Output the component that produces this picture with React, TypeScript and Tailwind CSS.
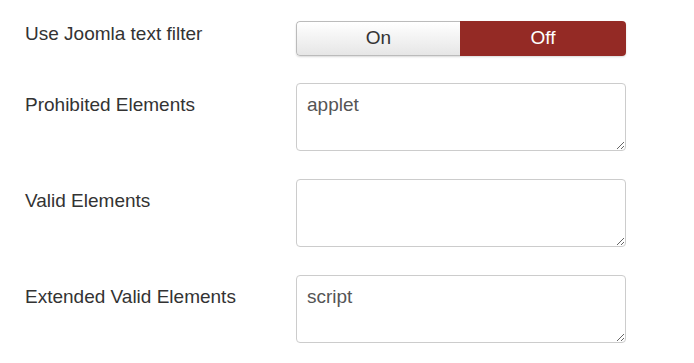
import React from "react";

const rows = [
  { label: "Prohibited Elements", value: "applet" },
  { label: "Valid Elements", value: "" },
  { label: "Extended Valid Elements", value: "script" },
];

const App: React.FC = () => {
  return (
    <div
      className="w-[694px] h-[363px] bg-white pl-[25px] pt-[21px] text-[#333]"
      style={{ fontFamily: '"Liberation Sans", Arial, sans-serif' }}
    >
      {/* Joomla text filter toggle */}
      <div className="flex items-start h-[34px]">
        <div className="w-[271px] text-[19px] leading-[24px] pt-[1px]">Use Joomla text filter</div>
        <div className="flex w-[330px] h-[35px] rounded-[4px] overflow-hidden shadow-[0_1px_2px_rgba(0,0,0,0.15)]">
          <div className="flex-1 flex items-center justify-center bg-gradient-to-b from-white to-[#e6e6e6] border border-[#bbb] border-r-0 rounded-l-[4px] text-[19px] text-[#333]">
            On
          </div>
          <div className="w-[166px] flex items-center justify-center bg-[#942a25] text-white text-[19px]">
            Off
          </div>
        </div>
      </div>

      {rows.map((row, i) => (
        <div key={i} className="flex items-start mt-[28px] first:mt-[29px]">
          <div className="w-[271px] text-[19px] leading-[24px] pt-[10px]">{row.label}</div>
          <textarea
            readOnly
            defaultValue={row.value}
            className="w-[330px] h-[68px] border border-[#ccc] rounded-[4px] px-[10px] pt-[8px] pb-[4px] text-[19px] leading-[26px] text-[#555] outline-none resize-y"
            style={{ fontFamily: '"Liberation Sans", Arial, sans-serif' }}
          />
        </div>
      ))}
    </div>
  );
};

export default App;
